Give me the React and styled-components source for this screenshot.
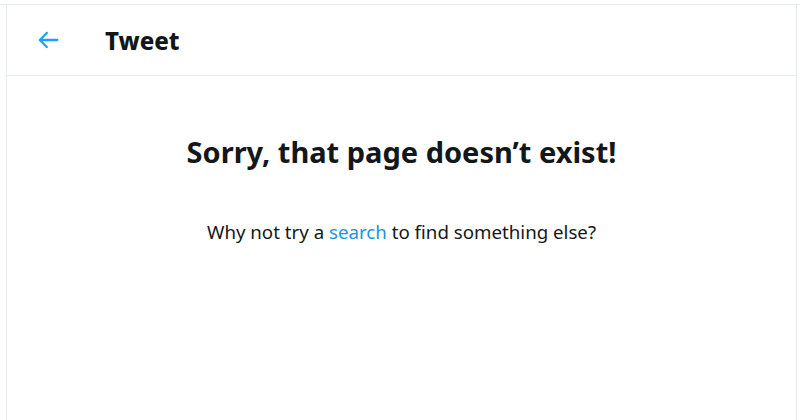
import React from "react";
import styled, { createGlobalStyle } from "styled-components";

const GlobalStyle = createGlobalStyle`
  html, body {
    margin: 0;
    padding: 0;
    background: #ffffff;
    font-family: "Noto Sans", "Open Sans", sans-serif;
  }
`;

const Page = styled.div`
  width: 800px;
  height: 420px;
  overflow: hidden;
  padding-top: 4px;
  box-sizing: border-box;
`;

const TopRule = styled.div`
  height: 1px;
  background: #e6ecf0;
`;

const Column = styled.main`
  margin-left: 6px;
  width: 791px;
  height: 415px;
  box-sizing: border-box;
  border-left: 1px solid #e6ecf0;
  border-right: 1px solid #e6ecf0;
`;

const Header = styled.header`
  display: flex;
  align-items: center;
  height: 71px;
  box-sizing: border-box;
  border-bottom: 1px solid #e6ecf0;
  padding-left: 26px;
`;

const BackButton = styled.button`
  display: flex;
  align-items: center;
  justify-content: center;
  width: 30px;
  height: 30px;
  padding: 0;
  border: none;
  background: none;
  color: #1da1f2;
  cursor: pointer;
`;

const Title = styled.h2`
  margin: 0 0 0 42px;
  font-size: 24px;
  font-weight: 800;
  color: #14171a;
`;

const Body = styled.section`
  display: flex;
  flex-direction: column;
  align-items: center;
  padding-top: 56px;
`;

const Heading = styled.h1`
  margin: 0;
  font-size: 29px;
  font-weight: 700;
  color: #14171a;
`;

const Hint = styled.p`
  margin: 48px 0 0;
  font-size: 18.7px;
  color: #14171a;
`;

const Link = styled.a`
  color: #1b95e0;
  text-decoration: none;
`;

const App = () => {
  return (
    <Page>
      <GlobalStyle />
      <TopRule />
      <Column>
        <Header>
          <BackButton aria-label="Back">
            <svg viewBox="0 0 24 24" width="28" height="28" fill="currentColor">
              <path d="M20 11H7.414l4.293-4.293c.39-.39.39-1.023 0-1.414s-1.023-.39-1.414 0l-6 6c-.39.39-.39 1.023 0 1.414l6 6c.195.195.45.293.707.293s.512-.098.707-.293c.39-.39.39-1.023 0-1.414L7.414 13H20c.553 0 1-.447 1-1s-.447-1-1-1z" />
            </svg>
          </BackButton>
          <Title>Tweet</Title>
        </Header>
        <Body>
          <Heading>Sorry, that page doesn’t exist!</Heading>
          <Hint>
            Why not try a <Link href="#">search</Link> to find something else?
          </Hint>
        </Body>
      </Column>
    </Page>
  );
};

export default App;
